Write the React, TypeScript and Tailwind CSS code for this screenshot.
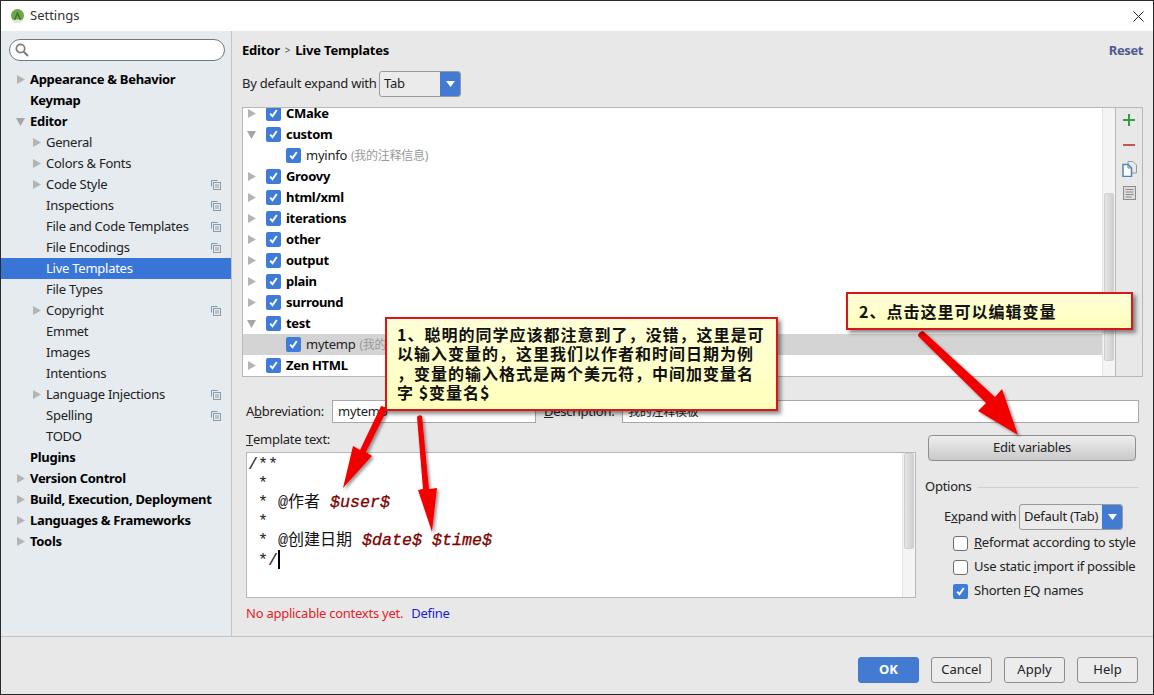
import React from "react";

const F = "font-['Noto_Sans','Noto_Sans_CJK_SC',sans-serif]";

function Tri({ open }: { open?: boolean }) {
  return (
    <svg width="9" height="9" viewBox="0 0 9 9" className="shrink-0">
      {open ? <path d="M0 1h9L4.5 9z" fill="#a6a6a6" /> : <path d="M1 0l8 4.5L1 9z" fill="#b4b4b4" />}
    </svg>
  );
}

function Check({ on = true }: { on?: boolean }) {
  return on ? (
    <span className="w-[15px] h-[15px] rounded-[2px] bg-[#3f7bd8] flex items-center justify-center shrink-0">
      <svg width="11" height="11" viewBox="0 0 11 11">
        <path d="M2.2 5.6l2.3 2.6L8.8 2" fill="none" stroke="#fff" strokeWidth="2" />
      </svg>
    </span>
  ) : (
    <span className="w-[15px] h-[15px] rounded-[3px] bg-white border border-[#6f6f6f] shrink-0" />
  );
}

function ProjIcon() {
  return (
    <svg width="10" height="10" viewBox="0 0 10 10" className="shrink-0">
      <path d="M0.5 6.5V0.5H6.5" fill="none" stroke="#6d9dc0" />
      <rect x="2.5" y="2.5" width="7" height="7" fill="#e6ebf0" stroke="#8a9aa6" />
      <path d="M4 5h4M4 7h4" stroke="#8a9aa6" />
    </svg>
  );
}

const side: [string, number, "c" | "o" | "", boolean?][] = [
  ["Appearance & Behavior", 0, "c"],
  ["Keymap", 0, ""],
  ["Editor", 0, "o"],
  ["General", 1, "c"],
  ["Colors & Fonts", 1, "c"],
  ["Code Style", 1, "c", true],
  ["Inspections", 1, "", true],
  ["File and Code Templates", 1, "", true],
  ["File Encodings", 1, "", true],
  ["Live Templates", 1, ""],
  ["File Types", 1, ""],
  ["Copyright", 1, "c", true],
  ["Emmet", 1, ""],
  ["Images", 1, ""],
  ["Intentions", 1, ""],
  ["Language Injections", 1, "c", true],
  ["Spelling", 1, "", true],
  ["TODO", 1, ""],
  ["Plugins", 0, ""],
  ["Version Control", 0, "c"],
  ["Build, Execution, Deployment", 0, "c"],
  ["Languages & Frameworks", 0, "c"],
  ["Tools", 0, "c"],
];

const tree: [string, "c" | "o" | "g", string?][] = [
  ["CMake", "c"],
  ["custom", "o"],
  ["myinfo", "g", "(我的注释信息)"],
  ["Groovy", "c"],
  ["html/xml", "c"],
  ["iterations", "c"],
  ["other", "c"],
  ["output", "c"],
  ["plain", "c"],
  ["surround", "c"],
  ["test", "o"],
  ["mytemp", "g", "(我的注释模板)"],
  ["Zen HTML", "c"],
];

function Sidebar() {
  return (
    <div className="w-[231px] shrink-0 bg-[#e6ebf0] border-r border-[#c4c4c4]">
      <div className="mt-[8px] mb-[8px] mx-[8px] h-[22px] w-[216px] rounded-full bg-white border border-[#777] flex items-center pl-[5px]">
        <svg width="14" height="14" viewBox="0 0 14 14">
          <circle cx="5.5" cy="5.5" r="4.2" fill="none" stroke="#7c7c7c" strokeWidth="1.7" />
          <path d="M8.7 8.7L13 13" stroke="#7c7c7c" strokeWidth="2" />
        </svg>
      </div>
      {side.map(([t, l, a, ic]) => {
        const sel = t === "Live Templates";
        return (
          <div key={t} className={`h-[21px] flex items-center ${sel ? "bg-[#3875d7] text-white tracking-[-0.25px]" : l === 0 ? "font-bold text-black tracking-[-0.3px]" : "text-[#222] tracking-[-0.25px]"}`}>
            <span className={`${l === 0 ? "w-[29px] pl-[15px]" : "w-[45px] pl-[31px]"} shrink-0 flex`}>
              {a ? <Tri open={a === "o"} /> : null}
            </span>
            <span className="flex-1 whitespace-nowrap">{t}</span>
            {ic ? <span className="mr-[10px] flex"><ProjIcon /></span> : null}
          </div>
        );
      })}
    </div>
  );
}

function Combo({ text, w }: { text: string; w: string }) {
  return (
    <div className={`${w} h-[26px] border border-[#9a9a9a] rounded-[3px] bg-[#ebebeb] flex items-stretch overflow-hidden shrink-0`}>
      <span className="flex-1 pl-[4px] flex items-center whitespace-nowrap text-[#222]">{text}</span>
      <span className="w-[21px] -my-px -mr-px bg-[#437bd3] flex items-center justify-center rounded-r-[3px]">
        <svg width="9" height="6" viewBox="0 0 9 6"><path d="M0 0h9L4.5 6z" fill="#fff" /></svg>
      </span>
    </div>
  );
}

function TreeBox() {
  return (
    <div className="h-[270px] flex border border-[#b8b8b8]">
      <div className="flex-1 bg-white overflow-hidden">
        <div className="-mt-[5px]">
          {tree.map(([t, k, d]) => (
            <div key={t} className={`h-[21px] flex items-center ${t === "mytemp" ? "bg-[#d4d4d4]" : ""}`}>
              {k === "g" ? (
                <>
                  <span className="w-[43px] shrink-0" />
                  <Check />
                  <span className="ml-[5px] text-[#222]">{t}</span>
                  <span className="ml-[4px] text-[#9a9a9a] text-[12px]">{d}</span>
                </>
              ) : (
                <>
                  <span className="w-[23px] pl-[4px] shrink-0 flex"><Tri open={k === "o"} /></span>
                  <Check />
                  <span className="ml-[5px] font-bold text-black tracking-[-0.3px]">{t}</span>
                </>
              )}
            </div>
          ))}
        </div>
      </div>
      <div className="w-[13px] bg-[#f4f4f4] border-l border-[#e4e4e4] pt-[85px]">
        <div className="w-[10px] h-[168px] mx-auto rounded-[2px] bg-gradient-to-r from-[#e6e6e6] to-[#cfcfcf] border border-[#d0d0d0]" />
      </div>
      <div className="w-[27px] bg-[#e8e8e8] border-l border-[#b8b8b8] flex flex-col items-center pt-[5px]">
        <svg width="14" height="14" viewBox="0 0 14 14" className="mb-[11px]"><path d="M7 1v12M1 7h12" stroke="#2f9e44" strokeWidth="2" /></svg>
        <svg width="14" height="14" viewBox="0 0 14 14" className="mb-[9px]"><path d="M1 7h12" stroke="#c75450" strokeWidth="2" /></svg>
        <svg width="15" height="16" viewBox="0 0 15 16" className="mb-[9px]">
          <path d="M6 0.5h5l3.5 3.5V12H6z" fill="#e8e8e8" stroke="#9a9a9a" />
          <path d="M1 3.5h5l3.5 3.5v8.5H1z" fill="#fff" stroke="#4d86b5" strokeWidth="1.5" />
          <path d="M6 3.5V7h3.5" fill="none" stroke="#4d86b5" />
        </svg>
        <svg width="13" height="14" viewBox="0 0 13 14">
          <rect x="0.5" y="0.5" width="12" height="13" fill="#ddd" stroke="#8c8c8c" />
          <path d="M2.5 3.5h8M2.5 6h8M2.5 8.5h8M2.5 11h6" stroke="#8c8c8c" />
        </svg>
      </div>
    </div>
  );
}

function Line({ children }: { children?: React.ReactNode }) {
  return <div className="h-[19px] whitespace-pre leading-[19px]">{children}</div>;
}

function Editor() {
  const v = "text-[#800000] italic [-webkit-text-stroke:0.3px_#800000]";
  const c = "text-[16px] leading-[0] text-[#111]";
  return (
    <div className="h-[146px] mt-[3px] bg-white border border-[#b8b8b8] flex font-['Liberation_Mono','Noto_Sans_CJK_SC',monospace] text-[16.67px] tracking-normal text-[#222]">
      <div className="flex-1 pl-[1px] pt-[2px]">
        <Line>/**</Line>
        <Line> *</Line>
        <Line> * @<span className={c}>作者</span> <span className={v}>$user$</span></Line>
        <Line> *</Line>
        <Line> * @<span className={c}>创建日期</span> <span className={v}>$date$</span> <span className={v}>$time$</span></Line>
        <Line> */<span className="inline-block w-[2px] h-[19px] bg-black align-[-4px]" /></Line>
      </div>
      <div className="w-[13px] bg-[#f4f4f4] border-l border-[#e4e4e4]">
        <div className="w-[10px] h-[96px] mx-auto rounded-[2px] bg-gradient-to-r from-[#e6e6e6] to-[#cfcfcf] border border-[#d0d0d0]" />
      </div>
    </div>
  );
}

function Btn({ children, primary }: { children: React.ReactNode; primary?: boolean }) {
  return (
    <div className={`w-[61px] h-[26px] rounded-[3px] flex items-center justify-center ${primary ? "bg-[#437bd3] text-white font-bold border border-[#437bd3]" : "bg-[#ececec] border border-[#8e8e8e] text-[#222]"}`}>
      {children}
    </div>
  );
}

function Opt({ on = false, children }: { on?: boolean; children: React.ReactNode }) {
  return (
    <div className="h-[24px] flex items-center pl-[28px]">
      <Check on={on} />
      <span className="ml-[6px] whitespace-nowrap text-[#222]">{children}</span>
    </div>
  );
}

function Main() {
  return (
    <div className="flex-1 bg-[#e8e8e8] px-[10px] pt-[9px] min-w-0 tracking-[-0.25px]">
      <div className="h-[21px] flex items-center justify-between">
        <div className="font-bold text-black flex items-center tracking-[-0.2px]">
          Editor<span className="mx-[5px] font-normal text-[#555] text-[10px]">&gt;</span>Live Templates
        </div>
        <div className="font-bold text-[#51598f] tracking-[-0.4px]">Reset</div>
      </div>
      <div className="h-[26px] mt-[10px] flex items-center">
        <span className="w-[137px] text-[#222] whitespace-nowrap">By default expand with</span>
        <Combo text="Tab" w="w-[82px]" />
      </div>
      <div className="mt-[10px]"><TreeBox /></div>
      <div className="mt-[23px] ml-[4px] mr-[4px] h-[23px] flex items-center text-[#222]">
        <span className="w-[86px] whitespace-nowrap">A<u>b</u>breviation:</span>
        <div className="w-[204px] h-[23px] bg-white border border-[#a8a8a8] pl-[5px] flex items-center">mytemp</div>
        <span className="w-[86px] pl-[8px] whitespace-nowrap"><u>D</u>escription:</span>
        <div className="flex-1 h-[23px] bg-white border border-[#a8a8a8] pl-[5px] flex items-center text-[12px]">我的注释模板</div>
      </div>
      <div className="ml-[4px] mr-[4px] flex">
        <div className="w-[670px] shrink-0">
          <div className="h-[18px] mt-[8px] flex items-center text-[#222] whitespace-nowrap"><u>T</u>emplate text:</div>
          <Editor />
          <div className="mt-[7px] h-[18px] flex items-center whitespace-nowrap">
            <span className="text-[#e8202a]">No applicable contexts yet.</span>
            <span className="ml-[8px] text-[#1c1cd8]">Define</span>
          </div>
        </div>
        <div className="flex-1 pl-[9px] min-w-0">
          <div className="mt-[12px] ml-[3px] mr-[3px] h-[26px] rounded-[4px] border border-[#8e8e8e] bg-gradient-to-b from-[#efefef] to-[#c9c9c9] flex items-center justify-center text-[#222]">Edit variables</div>
          <div className="mt-[17px] h-[18px] flex items-center text-[#222]">
            <span className="whitespace-nowrap">Options</span>
            <span className="flex-1 ml-[5px] h-px bg-[#d0d0d0]" />
          </div>
          <div className="mt-[8px] flex items-center pl-[19px]">
            <span className="w-[75px] whitespace-nowrap text-[#222]">E<u>x</u>pand with</span>
            <Combo text="Default (Tab)" w="w-[104px]" />
          </div>
          <div className="mt-[1px]">
            <Opt><u>R</u>eformat according to style</Opt>
            <Opt>Use static <u>i</u>mport if possible</Opt>
            <Opt on>Shorten <u>F</u>Q names</Opt>
          </div>
        </div>
      </div>
    </div>
  );
}

function Arrows() {
  return (
    <svg className="absolute left-0 top-0 pointer-events-none" width="1154" height="695" viewBox="0 0 1154 695">
      <defs>
        <filter id="s" x="-30%" y="-30%" width="160%" height="160%">
          <feDropShadow dx="2" dy="2" stdDeviation="1.5" floodColor="#000" floodOpacity="0.4" />
        </filter>
      </defs>
      <g fill="#f20606" filter="url(#s)">
        <path d="M917 335Q917 331 922 330L994 396L1001 388L1017 434L977 410L985 402Z" />
        <path d="M380 405L387 407L365 451L371 455L342 487L352 445L359 449Z" />
        <path d="M416 416Q418 413 421 415L428 488L436 487L431 531L417 489L422 488Z" />
      </g>
    </svg>
  );
}

function Callout({ cls, children }: { cls: string; children: React.ReactNode }) {
  return (
    <div className={`absolute ${cls} border-[2px] border-[#d81818] bg-gradient-to-b from-[#ffffd8] to-[#ffffbc] shadow-[3px_3px_4px_rgba(0,0,0,0.45)] font-['Noto_Sans_CJK_SC',sans-serif] font-bold text-[16px] tracking-[1px] text-[#111] whitespace-nowrap`}>
      {children}
    </div>
  );
}

export default function App() {
  return (
    <div className={`relative w-[1154px] h-[695px] overflow-hidden border border-[#2a2a2a] flex flex-col bg-white ${F} text-[13px]`}>
      <div className="h-[30px] shrink-0 bg-white flex items-center pl-[9px] pr-[9px]">
        <svg width="15" height="15" viewBox="0 0 15 15">
          <circle cx="7.5" cy="6.5" r="6.5" fill="#6aa84a" />
          <path d="M2 12c1.5 2.5 9.5 2.5 11 0l-1.5-1.5h-8z" fill="#e4e6d4" />
          <path d="M4.5 11L7.5 4l3 7" fill="none" stroke="#3f6b2c" strokeWidth="1.3" />
        </svg>
        <span className="ml-[5px] flex-1 text-[#333]">Settings</span>
        <svg width="11" height="11" viewBox="0 0 11 11"><path d="M0.5 0.5l10 10M10.5 0.5l-10 10" stroke="#222" /></svg>
      </div>
      <div className="h-[605px] shrink-0 flex">
        <Sidebar />
        <Main />
      </div>
      <div className="flex-1 bg-[#e8e8e8] border-t border-[#c4c4c4] flex justify-end gap-[12px] pr-[15px] pt-[20px]">
        <Btn primary>OK</Btn>
        <Btn>Cancel</Btn>
        <Btn>Apply</Btn>
        <Btn>Help</Btn>
      </div>
      <Arrows />
      <Callout cls="left-[384px] top-[316px] w-[393px] h-[94px] pl-[10px] pt-[6px] leading-[19.4px]">
        <div>1、聪明的同学应该都注意到了，没错，这里是可</div>
        <div>以输入变量的，这里我们以作者和时间日期为例</div>
        <div>，变量的输入格式是两个美元符，中间加变量名</div>
        <div>字 $变量名$</div>
      </Callout>
      <Callout cls="left-[845px] top-[291px] w-[287px] h-[38px] pl-[11px] flex items-center">
        2、点击这里可以编辑变量
      </Callout>
    </div>
  );
}
